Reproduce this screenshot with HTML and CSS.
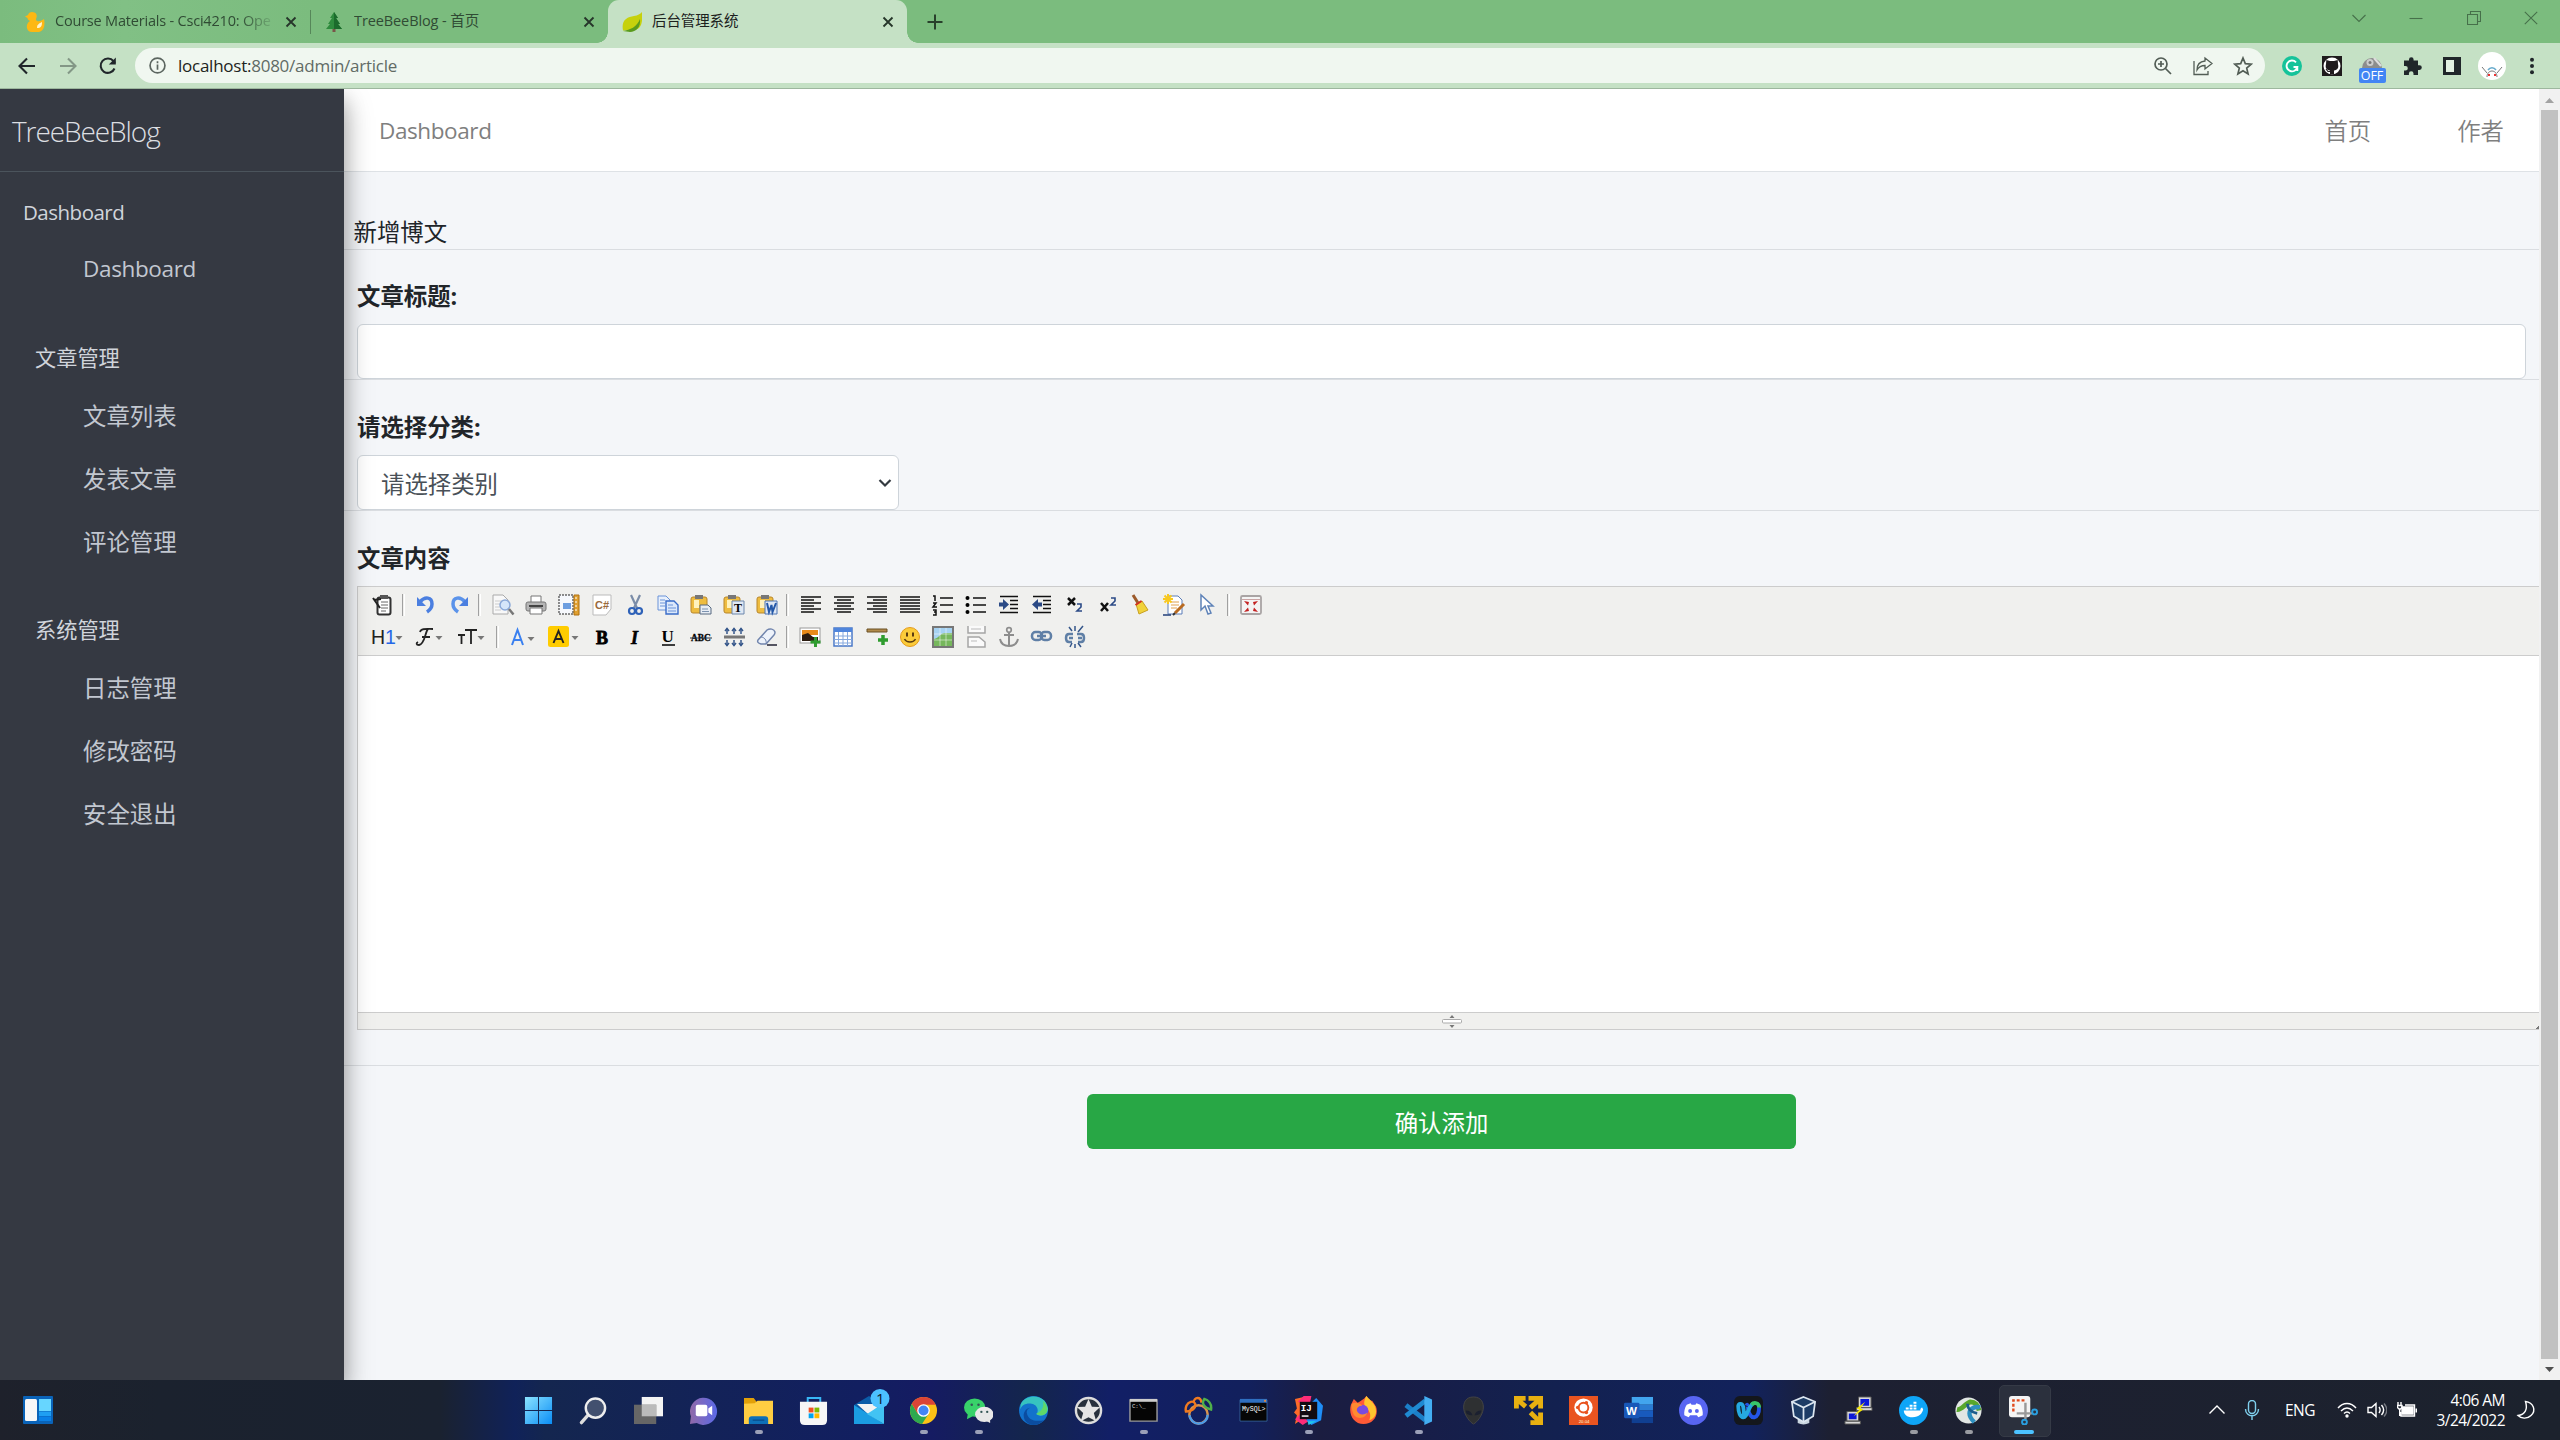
FILE: index.html
```html
<!DOCTYPE html>
<html lang="zh-CN">
<head>
<meta charset="utf-8">
<title>后台管理系统</title>
<link rel="stylesheet" href="styles.css">
</head>
<body>
<div class="screen">
  <header class="tabstrip">
    <div class="tab tab-first">
      <svg class="fav" viewBox="0 0 20 20"><path fill="#fdb813" d="M7 0c4 0 5.500 3 4.500 5.500C11 7 10.500 8 12 9c3 1 5-1 7-2 1 4 1 12-5 13H7c-6 0-7-8-2-11C3 8 2.500 7 2.500 6L0 4.500 3 3C3.500 1 5 0 7 0z"/><path fill="#fff4cc" d="M17 10c0 4-1 6-5 6 0-3 1-4 5-6z"/></svg>
      <span class="tab-title fade">Course Materials - Csci4210: Ope</span>
      <svg class="x" viewBox="0 0 12 12"><path d="M1.500 1.500l9 9M10.500 1.500l-9 9"/></svg>
    </div>
    <div class="tab tab-second">
      <svg class="fav" viewBox="0 0 20 20"><path fill="#795548" d="M8.500 15h3v5h-3z"/><path fill="#2e8b3d" d="M10 0l4 6h-2l4 6h-2l4 5H2l4-5H4l4-6H6z"/><path fill="#1b6b2c" d="M10 0l4 6h-2l4 6h-2l4 5h-8z"/></svg>
      <span class="tab-title">TreeBeeBlog - 首页</span>
      <svg class="x" viewBox="0 0 12 12"><path d="M1.500 1.500l9 9M10.500 1.500l-9 9"/></svg>
    </div>
    <div class="tab tab-active">
      <svg class="fav" viewBox="0 0 20 20"><path fill="#c6d10c" d="M20 0c1 12-1 20-13 18l-6 .5C-1 8 5 5 12 4c4-.5 6-2 8-4z"/><path fill="#5a9b1c" d="M1 19c7-1 14-4 17-12 1 8-4 13-10 13-2 0-5-1-7-1z"/></svg>
      <span class="tab-title">后台管理系统</span>
      <svg class="x" viewBox="0 0 12 12"><path d="M1.500 1.500l9 9M10.500 1.500l-9 9"/></svg>
    </div>
    <svg class="newtab" viewBox="0 0 16 16"><path d="M8 0.500v15M0.500 8h15"/></svg>
    <div class="winctl">
      <svg viewBox="0 0 14 14"><path d="M.5 4l6.500 6.500L13.500 4"/></svg>
      <svg viewBox="0 0 14 14"><path d="M.5 7.500h13"/></svg>
      <svg viewBox="0 0 14 14"><path d="M.5 3.500h10v10H.5zM3.500 3V.5h10v10H11"/></svg>
      <svg viewBox="0 0 14 14"><path d="M.8.800l12.400 12.400M13.200.800L.8 13.200"/></svg>
    </div>
  </header>

  <div class="navbar">
    <div class="navbtns">
      <svg viewBox="0 0 20 20"><path d="M18 10H3M10 2.500L2.500 10l7.500 7.500"/></svg>
      <svg class="dim" viewBox="0 0 20 20"><path d="M2 10h15M10 2.500l7.500 7.500-7.500 7.500"/></svg>
      <svg viewBox="0 0 20 20"><path d="M16.500 12.500A7.200 7.200 0 1 1 15.500 5.200L17 7"/><path class="tip" d="M17.800 1.500v7h-7z"/></svg>
    </div>
    <div class="omnibox">
      <svg class="info" viewBox="0 0 16 16"><circle cx="8" cy="8" r="7"/><path d="M8 7v5M8 4v1.800"/></svg>
      <span class="url"><b>localhost:</b>8080/admin/article</span>
      <div class="omni-icons">
        <svg viewBox="0 0 20 20"><circle cx="8" cy="8" r="6"/><path d="M12.500 12.500l5.500 5.500M8 5v6M5 8h6"/></svg>
        <svg viewBox="0 0 20 20"><path d="M1 5v13.500h14V15M12 2l7 5.500L12 13v-3.500c-4 0-6 1-8 4.500 0-5 3-8.500 8-9z" stroke-width="1.300"/></svg>
        <svg viewBox="0 0 20 20"><path d="M10 2l2.300 5.600 6 .5-4.600 4 1.400 5.900L10 14.800 4.900 18l1.400-5.900-4.600-4 6-.5z"/></svg>
      </div>
    </div>
    <div class="exts">
      <svg viewBox="0 0 20 20"><circle cx="10" cy="10" r="10" fill="#15c39a"/><path d="M14 6.300A5.400 5.400 0 1 0 15.300 11H11.500M15.300 11v4" fill="none" stroke="#fff" stroke-width="1.900"/></svg>
      <svg viewBox="0 0 20 20"><path fill="#1f1b1d" d="M0 0h20v20H0z"/><circle cx="10" cy="10" r="8.500" fill="#fff"/><path fill="#1f1b1d" d="M8 18.500v-4c-3.500-.5-5-2.500-4-6.500L4.300 4 8 5h4l3.700-1 .3 4c1 4-.5 6-4 6.500v4z"/><path stroke="#1f1b1d" stroke-width="1.200" d="M4 13l2 2.500h3" fill="none"/></svg>
      <span class="offext"><svg viewBox="0 0 22 12"><path fill="#8d8d8d" d="M1 12a10 10 0 0 1 20 0z"/><circle cx="9" cy="6.500" r="3.500" fill="#ccc"/><circle cx="9" cy="6.500" r="1.500" fill="#777"/><path d="M13 2l7 8" stroke="#ddd" stroke-width="2"/></svg><i>OFF</i></span>
      <svg viewBox="0 0 20 20"><path fill="#20262a" d="M2 4.500h5V3.500a2.300 2.300 0 0 1 4.600 0v1H16v4.800h1.500a2.300 2.300 0 0 1 0 4.600H16V19h-4.500v-1.500a2.300 2.300 0 0 0-4.600 0V19H2v-4.500h1.500a2.300 2.300 0 0 0 0-4.600H2z"/></svg>
      <svg viewBox="0 0 20 20"><path fill="#20262a" d="M1 1h18v18H1z"/><path fill="#e2f0e2" d="M4 4h8v12H4z"/></svg>
      <svg class="avatar" viewBox="0 0 28 28"><circle cx="14" cy="14" r="14" fill="#fff"/><path d="M4 15l5 6M24 15l-5 6M9 25c0-8 10-8 10 0" fill="none" stroke="#777"/><path d="M10 18c2-3 6-3 8 0" fill="none" stroke="#6ac" stroke-width="1.500"/><path d="M10 22h2v2h-2zM16 22h2v2h-2z" fill="#e33"/></svg>
      <svg viewBox="0 0 20 20"><g fill="#20262a"><circle cx="10" cy="3.800" r="2"/><circle cx="10" cy="10" r="2"/><circle cx="10" cy="16.200" r="2"/></g></svg>
    </div>
  </div>

  <div class="page">
    <aside class="sidebar">
      <div class="brand">TreeBeeBlog</div>
      <nav class="menu">
        <div class="head head-en">Dashboard</div>
        <a class="item item-en">Dashboard</a>
        <div class="head">文章管理</div>
        <a class="item">文章列表</a>
        <a class="item">发表文章</a>
        <a class="item">评论管理</a>
        <div class="head head-sys">系统管理</div>
        <a class="item">日志管理</a>
        <a class="item">修改密码</a>
        <a class="item">安全退出</a>
      </nav>
    </aside>
    <div class="content">
      <div class="topbar"><span class="en">Dashboard</span><span class="links"><a>首页</a><a>作者</a></span></div>
      <main class="main">
        <div class="title-row">新增博文</div>
        <section class="field field-title"><label>文章标题:</label><div class="input"></div></section>
        <section class="field"><label>请选择分类:</label><div class="input select"><span>请选择类别</span><svg viewBox="0 0 14 10"><path d="M1.500 2L7 7.500 12.500 2"/></svg></div></section>
        <section class="field editor-field">
          <label>文章内容</label>
          <div class="editor">
            <div class="tools">
              <div class="row">
                <span class="b"><svg viewBox="0 0 22 22"><rect x="5.500" y="3.500" width="13" height="17" rx="2" fill="#fff" stroke="#333" stroke-width="2"/><path fill="#555" d="M8 1h8v4H8z"/><path stroke="#666" d="M9 8h7M9 11h7M9 14h7M9 17h5"/><path stroke="#222" stroke-width="2" d="M1 4l7 10M2 6l7-1"/></svg></span>
                <span class="s"></span>
                <span class="b"><svg viewBox="0 0 22 22"><path fill="none" stroke="#4b7fe0" stroke-width="3.500" d="M5 8c5-6 12-5 12 2 0 4-2 6-5 8"/><path fill="#4b7fe0" d="M2 3v9h9z"/></svg></span>
                <span class="b"><svg viewBox="0 0 22 22"><path fill="none" stroke="#5b93ea" stroke-width="3.500" d="M17 8C12 2 5 3 5 10c0 4 2 6 5 8"/><path fill="#4b7fe0" d="M20 3v9h-9z"/></svg></span>
                <span class="s"></span>
                <span class="b"><svg viewBox="0 0 22 22"><path fill="#f8f8f8" stroke="#aaa" d="M1 1h10l5 5v14H1z"/><path stroke="#ccc" d="M3 7h8M3 10h5M3 13h5M3 16h6"/><circle cx="13" cy="11" r="5" fill="#d5e6fa" stroke="#8aa8d8" stroke-width="1.500"/><path stroke="#777" stroke-width="2.500" d="M17 15l4.500 5.500"/></svg></span>
                <span class="b"><svg viewBox="0 0 22 22"><path fill="#fff" stroke="#777" d="M6 2h10v8H6z"/><rect x="1" y="8" width="20" height="9" rx="2" fill="#b5b5b5" stroke="#777"/><path fill="#444" d="M4 11h14v2H4z"/><path fill="#fff" stroke="#777" d="M5 14h12v6H5z"/></svg></span>
                <span class="b"><svg viewBox="0 0 22 22"><path fill="#f6f8fc" stroke="#222" stroke-dasharray="2 1" d="M1 1h14v19H1z"/><path fill="#6d9ee0" d="M5 9h8v6H5z"/><path fill="#e0a030" stroke="#b07010" d="M16 1h5v20h-5z"/><path stroke="#fff" d="M17 4h2M17 8h2M17 12h2M17 16h2"/></svg></span>
                <span class="b"><svg viewBox="0 0 22 22"><path fill="#fff" stroke="#bbb" d="M2 1h18v14l-5 6H2z"/><text x="4" y="14.500" font-size="11" font-weight="bold" fill="#9a6a3c" font-family="Liberation Sans">C#</text></svg></span>
                <span class="b"><svg viewBox="0 0 22 22"><path stroke="#7b8da8" stroke-width="2.200" d="M7 1l6 13M16 1l-6 13"/><circle cx="8" cy="17" r="3" fill="none" stroke="#2f62b8" stroke-width="2.200"/><circle cx="15" cy="17" r="3" fill="none" stroke="#2f62b8" stroke-width="2.200"/></svg></span>
                <span class="b"><svg viewBox="0 0 22 22"><path fill="#e8f0fc" stroke="#6a93d8" d="M1 2h8l4 4v10H1z"/><path fill="#dbe8fb" stroke="#3a6cc8" stroke-width="1.400" d="M9 7h8l4 4v9H9z"/><path stroke="#6a93d8" d="M11 11h5M11 14h8M11 17h8M3 6h5M3 9h5M3 12h5"/></svg></span>
                <span class="b"><svg viewBox="0 0 22 22"><rect x="1" y="3" width="16" height="16" rx="2" fill="#eebc40" stroke="#b8862a"/><path fill="#fff2bd" d="M4 6h5v8H4z"/><path fill="#777" d="M5 1h8v4H5z"/><path fill="#e8edf4" stroke="#566980" d="M10 11h8l3 3v6H10z"/><path stroke="#7d93b0" d="M12 15h6M12 17.500h7"/></svg></span>
                <span class="b"><svg viewBox="0 0 22 22"><rect x="1" y="3" width="16" height="16" rx="2" fill="#eebc40" stroke="#b8862a"/><path fill="#fff2bd" d="M4 6h5v8H4z"/><path fill="#777" d="M5 1h8v4H5z"/><path fill="#dfe8f4" stroke="#6c87ac" d="M9 7h12v13H9z"/><text x="11" y="18" font-size="12" font-weight="bold" font-family="Liberation Serif">T</text></svg></span>
                <span class="b"><svg viewBox="0 0 22 22"><rect x="1" y="3" width="16" height="16" rx="2" fill="#eebc40" stroke="#b8862a"/><path fill="#fff2bd" d="M4 6h5v8H4z"/><path fill="#777" d="M5 1h8v4H5z"/><path fill="#dfe8f4" stroke="#4c75b4" d="M9 7h12v13H9z"/><path fill="none" stroke="#2458a8" stroke-width="2" d="M11 9l2 9 2.500-7 1 7L20 9"/></svg></span>
                <span class="s"></span>
                <span class="b"><svg viewBox="0 0 22 22"><path class="k" d="M1 3h20M1 6h13M1 9h20M1 12h13M1 15h20M1 18h13"/></svg></span>
                <span class="b"><svg viewBox="0 0 22 22"><path class="k" d="M1 3h20M4 6h14M1 9h20M4 12h14M1 15h20M4 18h14"/></svg></span>
                <span class="b"><svg viewBox="0 0 22 22"><path class="k" d="M1 3h20M7 6h14M1 9h20M7 12h14M1 15h20M7 18h14"/></svg></span>
                <span class="b"><svg viewBox="0 0 22 22"><path class="k" d="M1 3h20M1 6h20M1 9h20M1 12h20M1 15h20M1 18h20"/></svg></span>
                <span class="b"><svg viewBox="0 0 22 22"><path class="k" d="M8 4h13M8 11h13M8 18h13M1 2h2v5M1 9h3l-3 4h4M1 16h3v2H2h2v3H1"/></svg></span>
                <span class="b"><svg viewBox="0 0 22 22"><path class="k" d="M8 4h13M8 11h13M8 18h13"/><circle cx="2.500" cy="4" r="2"/><circle cx="2.500" cy="11" r="2"/><circle cx="2.500" cy="18" r="2"/></svg></span>
                <span class="b"><svg viewBox="0 0 22 22"><path class="k" d="M2 2.500h18M12 6.500h8M12 10.500h8M12 14.500h8M2 18.500h18"/><path fill="#2b4a86" d="M1 8.500h4V5l6 5.500L5 16v-3.500H1z"/></svg></span>
                <span class="b"><svg viewBox="0 0 22 22"><path class="k" d="M2 2.500h18M12 6.500h8M12 10.500h8M12 14.500h8M2 18.500h18"/><path fill="#2b4a86" d="M11 8.500H7V5l-6 5.500L7 16v-3.500h4z"/></svg></span>
                <span class="b"><svg viewBox="0 0 22 22"><path stroke="#111" stroke-width="2.500" d="M4 4l7 7M11 4l-7 7"/><path fill="none" stroke="#2b4a86" stroke-width="1.600" d="M13 10h4v3l-4 4h5"/></svg></span>
                <span class="b"><svg viewBox="0 0 22 22"><path stroke="#111" stroke-width="2.500" d="M4 9l7 8M11 9l-7 8"/><path fill="none" stroke="#2b4a86" stroke-width="1.600" d="M14 4h4v3l-4 4h5"/></svg></span>
                <span class="b"><svg viewBox="0 0 22 22"><path stroke="#9c5a2a" stroke-width="3" d="M3 1l5 8"/><path fill="#f1d23a" stroke="#c8a020" d="M6 10l6-3 6 9-9 4z"/><path stroke="#d03020" stroke-width="2" d="M5.500 11l6-4"/></svg></span>
                <span class="b"><svg viewBox="0 0 22 22"><path fill="#fff" stroke="#5a7db8" d="M5 2h10l4 4v14H5z"/><path stroke="#e0a050" d="M8 8h8M8 11h8M8 14h6"/><path stroke="#b86a20" stroke-width="3" d="M21 10l-9 9"/><path stroke="#333" stroke-width="2" d="M12 19l-2 2"/><path stroke="#f8c820" stroke-width="2" d="M5 0v10M0 5h10M1.500 1.500l7 7M8.500 1.500l-7 7"/><path stroke="#223f78" stroke-width="1.500" d="M0 21h8"/></svg></span>
                <span class="b"><svg viewBox="0 0 22 22"><path fill="#fff" stroke="#5f83b8" stroke-width="1.500" d="M5 1v15l4-4 3 8 3-1-3-7h5z"/></svg></span>
                <span class="s"></span>
                <span class="b"><svg viewBox="0 0 22 22"><rect x="1" y="2" width="20" height="18" rx="1.500" fill="#f4f4f4" stroke="#a9a4a4" stroke-width="1.800"/><path stroke="#c9a4a4" d="M2 5.500h18"/><path fill="#c32222" d="M4 7l5 1-1 3.500zM18 7l-5 1 1 3.500zM4 18l5-1-1-3.500zM18 18l-5-1 1-3.500z"/></svg></span>
              </div>
              <div class="row row-2">
                <span class="d"><svg viewBox="0 0 32 22"><text x="0" y="18" font-size="19.500" font-family="Liberation Sans" fill="#222">H<tspan fill="#2467e8">1</tspan></text><path class="ar" d="M24.500 10h7L28 14z"/></svg></span>
                <span class="d"><svg viewBox="0 0 32 22"><path fill="none" stroke="#222" stroke-width="1.800" d="M7 6c1-4 7-3 13-3M15 3c-3 3-3 15-9 16-3 0-3-2-1-3M9 11h8"/><path class="ar" d="M22.500 10h7L26 14z"/></svg></span>
                <span class="d"><svg viewBox="0 0 32 22"><path fill="none" stroke="#222" stroke-width="1.800" d="M3 9h7M6.500 9v9M10 4h12M16 4v14"/><path class="ar" d="M22.500 10h7L26 14z"/></svg></span>
                <span class="s"></span>
                <span class="d d2"><svg viewBox="0 0 32 22"><path fill="none" stroke="#3a80f0" stroke-width="2" d="M5 19l5.500-15L16 19M7 14h7"/><path class="ar" d="M20.500 11h7L24 15z"/></svg></span>
                <span class="d d2"><svg viewBox="0 0 32 22"><rect x="0" y="0" width="21" height="21" rx="2.500" fill="#fc0"/><path fill="none" stroke="#222" stroke-width="1.900" d="M5.500 17l5-12 5 12M7 13h7"/><path class="ar" d="M23.500 10h7L27 14z"/></svg></span>
                <span class="b"><svg viewBox="0 0 22 22"><text x="5" y="17.500" font-size="18" font-weight="bold" stroke="#000" stroke-width=".8" font-family="Liberation Serif">B</text></svg></span>
                <span class="b"><svg viewBox="0 0 22 22"><text x="7" y="17.500" font-size="18" font-weight="bold" stroke="#000" stroke-width=".6" font-style="italic" font-family="Liberation Serif">I</text></svg></span>
                <span class="b"><svg viewBox="0 0 22 22"><text x="4.500" y="16" font-size="17" font-weight="bold" font-family="Liberation Serif">U</text><path stroke="#000" stroke-width="1.500" d="M5 19h13"/></svg></span>
                <span class="b"><svg viewBox="0 0 22 22"><text x="1" y="15" font-size="9.300" font-weight="bold" stroke="#000" stroke-width=".3" font-family="Liberation Serif">ABC</text><path stroke="#234" d="M0 12h22"/></svg></span>
                <span class="b"><svg viewBox="0 0 22 22"><path fill="#777" d="M1 9.500h21v3H1z"/><g stroke="#35568a" stroke-width="1.500" fill="none"><path d="M4 8V2.500M11 8V2.500M18 8V2.500M4 14v5.500M11 14v5.500M18 14v5.500"/><path d="M2 5l2-2.500L6 5M9 5l2-2.500L13 5M16 5l2-2.500L20 5M2 17l2 2.500L6 17M9 17l2 2.500 2-2.500M16 17l2 2.500 2-2.500"/></g></svg></span>
                <span class="b"><svg viewBox="0 0 22 22"><path fill="#eef3fb" stroke="#7185ad" stroke-width="1.500" d="M2 14L11 4c3-2 7-1 8 2 0 1 0 2-1 3l-8 9H5c-3-1-4-2-3-4z"/><path stroke="#7185ad" fill="none" d="M5 11c3 0 6 3 5 7"/><path stroke="#223" stroke-width="1.500" d="M11 19h10"/></svg></span>
                <span class="s"></span>
                <span class="b"><svg viewBox="0 0 22 22"><rect x="1" y="2" width="20" height="15" fill="#fff" stroke="#999"/><path fill="#e88a18" d="M3 4h16v5H3z"/><path fill="#2b1c10" d="M3 9l6-2 5 4h5v4H3z"/><path stroke="#2f9c2f" stroke-width="3" d="M16.500 11v10M11.500 16h10"/></svg></span>
                <span class="b"><svg viewBox="0 0 22 22"><path fill="#fff" stroke="#4a78c8" stroke-width="1.500" d="M2 2h18v18H2z"/><path fill="#4f85dc" d="M2 2h18v4H2z"/><path stroke="#86a9de" d="M2 10h18M2 13.500h18M2 17h18M6.500 6v14M11 6v14M15.500 6v14"/></svg></span>
                <span class="b"><svg viewBox="0 0 22 22"><path fill="#b08a4a" stroke="#6b5024" d="M1 3h20v3H1z"/><path stroke="#2f9c2f" stroke-width="3.500" d="M17 9v10M12 14h10"/></svg></span>
                <span class="b"><svg viewBox="0 0 22 22"><circle cx="11" cy="11" r="9.500" fill="#fbcb3a" stroke="#e59b1c"/><path stroke="#5b3b10" stroke-width="2" d="M8 6.500v4M14 6.500v4"/><path fill="none" stroke="#5b3b10" stroke-width="1.500" d="M5.500 13c2 4 9 4 11 0"/></svg></span>
                <span class="b"><svg viewBox="0 0 22 22"><path fill="#a6d2f2" stroke="#777" stroke-width="2" d="M1 1h20v20H1z"/><path fill="#76b75c" d="M2 13c5-1 6-6 11-6h7v13H2z"/><path stroke="#fff" stroke-opacity=".5" d="M8 2v18M14 2v18M2 8h18M2 14h18"/></svg></span>
                <span class="b"><svg viewBox="0 0 22 22"><path fill="#fafafa" stroke="#a5a5a5" stroke-width="1.500" d="M3 0v7h17V0M3 21V11h11l6 5v5z"/><path stroke="#bbb" d="M6 3h10M6 15h6"/></svg></span>
                <span class="b"><svg viewBox="0 0 22 22"><path fill="none" stroke="#8d8d8d" stroke-width="2" d="M11 6v14M6 9h10M2 13c1 5 5 7 9 7s8-2 9-7"/><circle cx="11" cy="4" r="2.300" fill="none" stroke="#8d8d8d" stroke-width="1.700"/></svg></span>
                <span class="b"><svg viewBox="0 0 22 22"><g fill="none" stroke="#5f7fa6" stroke-width="2.500"><rect x="1" y="6" width="10" height="8" rx="3.500"/><rect x="10" y="6" width="10" height="8" rx="3.500"/><path d="M6 10h9"/></g></svg></span>
                <span class="b"><svg viewBox="0 0 22 22"><g fill="none" stroke="#5f7fa6" stroke-width="2.500"><path d="M9 8H5c-4 0-4 8 0 8h3M13 8h4c4 0 4 8 0 8h-3M5 12h4M14 12h4"/></g><path stroke="#35568a" stroke-width="1.500" d="M11 0v5M5 1l3 4M19 0l-5 6M8 17l-2 4M11 18v4M14 17l3 4"/></svg></span>
              </div>
            </div>
            <div class="canvas"></div>
            <div class="status"><svg viewBox="0 0 20 13"><path fill="#777" d="M7.500 3L10 0l2.500 3zM7.500 10L10 13l2.500-3z"/><rect x=".5" y="4.500" width="19" height="3.500" rx="1" fill="#fff" stroke="#aaa"/></svg><i class="grip"></i></div>
          </div>
        </section>
        <div class="submit-row"><button class="submit">确认添加</button></div>
      </main>
    </div>
    <div class="scrollbar">
      <svg viewBox="0 0 21 21"><path fill="#a3a3a3" d="M6 14h9l-4.500-5z"/></svg>
      <div class="thumb"></div>
      <svg viewBox="0 0 21 21"><path fill="#505050" d="M6 8h9l-4.500 5z"/></svg>
    </div>
  </div>

  <footer class="taskbar">
    <svg class="widgets" viewBox="0 0 30 28"><rect width="30" height="28" rx="1" fill="#0a63b8"/><rect x="2" y="3" width="12" height="22" rx="1.500" fill="#f7f7f7"/><path fill="#67d6ff" d="M16 3h12v12H16z"/><path fill="#1f9ff2" d="M16 15.500h12V20H16z"/><path fill="#0a80e6" d="M16 20.500h12V25H16z"/></svg>
    <div class="apps">
      <span><svg viewBox="0 0 30 30"><defs><linearGradient id="w" x2="1" y2="1"><stop stop-color="#8be3ff"/><stop offset="1" stop-color="#0a8df5"/></linearGradient></defs><path fill="url(#w)" d="M1 1h13.500v13.500H1zM15.500 1H29v13.500H15.500zM1 15.500h13.500V29H1zM15.500 15.500H29V29H15.500z"/></svg></span>
      <span><svg viewBox="0 0 30 30"><path stroke="#ddd" stroke-width="3.500" stroke-linecap="round" d="M10 19l-7.500 8.500"/><circle cx="17" cy="12.500" r="10" fill="#42506f" stroke="#eee" stroke-width="2.500"/></svg></span>
      <span><svg viewBox="0 0 30 30"><path fill="#f4f4f4" d="M8 1h22v20H8z"/><path fill="#666" d="M0 9h23v20H0z"/><path fill="#bbb" d="M8 9h15v12H8z"/></svg></span>
      <span><svg viewBox="0 0 30 30"><defs><linearGradient id="t" x2="1"><stop stop-color="#9069a8"/><stop offset="1" stop-color="#5b69e8"/></linearGradient></defs><path fill="url(#t)" d="M1 29l1-8a14 14 0 1 1 6 7z"/><rect x="7" y="9" width="12" height="12" rx="2" fill="#fff"/><path fill="#fff" d="M20 13l4-3v10l-4-3z"/></svg></span>
      <span class="run"><svg viewBox="0 0 30 30"><path fill="#e2a008" d="M0 2h10l3 4v6H0z"/><path fill="#ffcd42" d="M0 8l11-.5L14 5h16v24H0z"/><path fill="#0e6fb8" d="M5 29v-5c0-2 1-3 3-3h14c2 0 3 1 3 3v5z"/><path stroke="#0a4f90" stroke-width="1.500" d="M9 25h12"/></svg></span>
      <span><svg viewBox="0 0 30 30"><path fill="none" stroke="#38b6f5" stroke-width="2" d="M9 8V2h13v6"/><path fill="#f6f6f6" d="M1 6h28v19q0 5-5 5H6q-5 0-5-5z"/><path fill="#f25022" d="M10 12h5v5h-5z"/><path fill="#7fba00" d="M16 12h5v5h-5z"/><path fill="#00a4ef" d="M10 18h5v5h-5z"/><path fill="#ffb900" d="M16 18h5v5h-5z"/></svg></span>
      <span><svg class="wide" viewBox="0 0 36 36"><path fill="#0b5ca8" d="M0 16L15 7l15 9v9H0z"/><path fill="#f3f3f3" d="M3 15h24L15 26z"/><path fill="#1b9de2" d="M0 16l30 19H0z"/><path fill="#42c3f3" d="M30 14v21L13 25z"/><circle cx="26" cy="9.500" r="9.500" fill="#4cc2ff"/><text x="22" y="15" font-size="15" font-family="Open Sans" fill="#10202c">1</text></svg></span>
      <span class="run"><svg viewBox="0 0 30 30"><circle cx="15" cy="15" r="14" fill="#fbc116"/><path fill="#2da94f" d="M2.900 8A14 14 0 0 0 13.500 29l7-11H9z"/><path fill="#db4437" d="M2.900 8a14 14 0 0 1 24.800 1H15L9 18z"/><circle cx="15" cy="15" r="6.500" fill="#fff"/><circle cx="15" cy="15" r="5.200" fill="#4285f4"/></svg></span>
      <span class="run"><svg viewBox="0 0 30 30"><ellipse cx="11" cy="12" rx="11" ry="9.500" fill="#38d26a"/><path fill="#38d26a" d="M4 18l-1 6 6-3z"/><ellipse cx="21" cy="19" rx="9.500" ry="8" fill="#e8e8e8"/><path fill="#e8e8e8" d="M22 25l5 3v-5z"/><g fill="#355"><circle cx="8" cy="9" r="1.300"/><circle cx="15" cy="9" r="1.300"/><circle cx="18" cy="16.500" r="1.200"/><circle cx="24" cy="16.500" r="1.200"/></g></svg></span>
      <span><svg viewBox="0 0 30 30"><circle cx="15" cy="15" r="15" fill="#1272cc"/><path fill="#36c3c0" d="M2 8C8-3 28-2 30 13c0 7-8 9-12 6 3-4 1-10-5-11C8 7 3 9 1 14z"/><path fill="#5fd868" d="M25 5c6 6 6 14-1 15-4 0-6-1-6-2 6-2 8-7 7-13z"/><path fill="#0b4da0" d="M8 17c1 8 9 10 18 8-7 7-16 6-20 0-3-6 0-12 6-13-3 1-4 3-4 5z"/></svg></span>
      <span><svg viewBox="0 0 30 30"><circle cx="15" cy="15" r="13" fill="#27303c" stroke="#ddd" stroke-width="2.500"/><path fill="#e4e4e4" d="M15 3l3.500 8 8.500.500-6.500 6L23 26l-8-4-8 4 2.500-8.500-6.500-6 8.500-.5z"/></svg></span>
      <span class="run"><svg viewBox="0 0 30 30"><path fill="#050505" stroke="#999" stroke-width="1.500" d="M1 4h28v22H1z"/><path fill="#ccc" d="M1 3h28v3H1z"/><text x="3" y="12" font-size="6" fill="#ddd" font-family="Liberation Mono">C:\_</text></svg></span>
      <span><svg viewBox="0 0 30 30"><g fill="none" stroke-width="2.500"><circle cx="15" cy="19" r="9.500" stroke="#d9934e"/><path stroke="#4c9be8" d="M5.500 20c1 5 5 9 10 8.500 5 0 9-4 9-9"/><path stroke="#f07a20" d="M2 16c-1-4 1-9 5-10s6 3 4 6-6 4-9 4zM10 7c0-6 8-7 8 0"/><path stroke="#4fb04a" d="M28 14C29 8 25 4 21 3c-3 4-1 9 7 11z"/></g></svg></span>
      <span><svg viewBox="0 0 30 30"><path fill="#060606" stroke="#335c94" d="M1 4h28v22H1z"/><path fill="#2f6fc0" d="M1 3h28v4H1z"/><path fill="#d84" d="M26 4h2v2h-2z"/><text x="3" y="16" font-size="6.800" fill="#fff" font-family="Liberation Mono">MySQL&gt;</text></svg></span>
      <span class="run"><svg viewBox="0 0 30 30"><path fill="#fc6a2a" d="M1 3l9-2 6 8-6 14-9 6 2-9-3-3 3-4z"/><path fill="#fe2c79" d="M10 0h8l-2 10-12-4zM1 24l6-6 8 8-6 4z"/><path fill="#1f8ef8" d="M18 7l5-5 7 8-2 15-10 5-5-5z"/><path fill="#21c8e8" d="M14 26h9l-8 4z"/><path fill="#120c12" d="M6 6h18v18H6z"/><text x="7" y="15" font-size="9.500" font-weight="bold" fill="#fff" font-family="Liberation Mono">IJ</text><path fill="#fff" d="M8 20h7v1.500H8z"/></svg></span>
      <span><svg viewBox="0 0 30 30"><path fill="#ff5a36" d="M2 9l3-6 4 4c3-2 6-3 9-7 3 4 4 5 6 5l4 6c3 9-3 18-13 18S-1 19 2 9z"/><path fill="#ffc52e" d="M18 0c4 5 10 8 10 16 0 4-3 8-7 9 2-5 1-9-3-12-3-3-3-8 0-13z"/><circle cx="14" cy="15" r="6" fill="#7a4be0"/><path fill="#ff8a30" d="M3 8c4-2 8-1 11 2-4 0-6 2-6 5 2 5 8 5 11 2-2 7-13 8-15 0-1-3-2-6-1-9z"/></svg></span>
      <span class="run"><svg viewBox="0 0 30 30"><path stroke="#1b7fc8" stroke-width="5" d="M2 9.500L22 25"/><path stroke="#1f8ad2" stroke-width="5" d="M2 20.500L22 5"/><path fill="#43aef2" d="M21 0l8 3.500v23L21 30z"/></svg></span>
      <span><svg viewBox="0 0 30 30"><path fill="#2e3032" stroke="#444" d="M15 1c8 0 11 6 10 13-1 6-6 13-10 15-4-2-9-9-10-15C4 7 7 1 15 1z"/><path fill="#1b2030" d="M7 15c4 0 6 2 7 5-4 0-7-1-7-5zM23 15c-4 0-6 2-7 5 4 0 7-1 7-5z"/></svg></span>
      <span><svg viewBox="0 0 30 30"><path fill="none" stroke="#e8b010" stroke-width="5" d="M2.500 13V2.500H12M4 4l8 7M15 2.500h12.500V13M26 4l-9 8M27.500 17v10.500H17M26 26l-9-9"/></svg></span>
      <span><svg viewBox="0 0 30 30"><path fill="#e95420" d="M0 0h30v30H0z"/><circle cx="15" cy="12" r="9.500" fill="#fff"/><circle cx="15" cy="12" r="5" fill="none" stroke="#e95420" stroke-width="2"/><g fill="#e95420"><circle cx="9" cy="12" r="1.800"/><circle cx="18" cy="7" r="1.800"/><circle cx="18" cy="17" r="1.800"/></g><text x="10" y="28" font-size="4.500" fill="#ffd" font-family="Liberation Sans">20.04</text></svg></span>
      <span><svg viewBox="0 0 30 30"><path fill="#42a5ee" d="M8 1h22v8H8z"/><path fill="#2b7cd3" d="M8 9h22v6H8z"/><path fill="#185abd" d="M8 15h22v7H8z"/><path fill="#103f91" d="M8 22h22v6H8z"/><rect x="0" y="7" width="16" height="16" rx="1.500" fill="#1857b8"/><text x="2" y="19.500" font-size="12" font-weight="bold" fill="#fff" font-family="Liberation Sans">W</text></svg></span>
      <span><svg viewBox="0 0 30 30"><circle cx="15" cy="15" r="15" fill="#5865f2"/><path fill="#fff" d="M8 9l4-1.500 1 1.500h4l1-1.500L22 9c2 3 3 7 2.500 11L20 22l-1.500-2h-7L10 22l-4.500-2C5 16 6 12 8 9z"/><circle cx="11.500" cy="15.500" r="2" fill="#5865f2"/><circle cx="18.500" cy="15.500" r="2" fill="#5865f2"/></svg></span>
      <span><svg viewBox="0 0 30 30"><rect width="30" height="30" rx="6" fill="#14171c"/><g fill="none" stroke-width="4"><path stroke="#2455e8" d="M13 10c2-5 0 13 8 12 4-1 5-7 5-11"/><path stroke="#25a8e0" d="M4.500 12c-1-5 4-5 5-1 1 5 1 11 0 11-3 0-5-5-5-10zM9 22c5 1 6-13 11-14"/><path stroke="#38c76a" d="M18 9c3-3 8-2 8 3"/></g></svg></span>
      <span><svg viewBox="0 0 30 30"><path fill="#c9d5e0" d="M9 23h12v5q-6 3-12 0z"/><path fill="#1d3c66" stroke="#dce6f0" stroke-width="1.800" d="M15 1l12 5-2 15-10 6-10-6L3 6z"/><path fill="none" stroke="#dce6f0" stroke-width="1.800" d="M3 6l12 6 12-6M15 12v15"/></svg></span>
      <span><svg viewBox="0 0 30 30"><path fill="#d8d8d8" stroke="#555" d="M15 1h13v11H15zM13 12h16v3H13zM3 16h12v10H3zM1 26h16v3H1z"/><path fill="#0a18d8" d="M17 3h9v7h-9zM5 18h8v6H5z"/><path fill="#f5e800" d="M22 6l-9 7 3 1-6 7 10-7-3-1z"/></svg></span>
      <span class="run gray"><svg viewBox="0 0 30 30"><circle cx="15" cy="15" r="15" fill="#0ea5f7"/><path fill="#fff" d="M5 15h17c0-2 1-3 2-3l1 2c-1 4-4 8-11 8-6 0-9-3-9-7zM7 12h3v2H7zM11 12h3v2h-3zM15 12h3v2h-3zM11 9h3v2h-3zM15 9h3v2h-3zM15 6h3v2h-3z"/></svg></span>
      <span class="run gray"><svg viewBox="0 0 30 30"><circle cx="15" cy="15" r="13.500" fill="#e2e6e4"/><path fill="none" stroke="#58a72c" stroke-width="5" d="M3 14c5 1 9-7 14-8 6 0 8 4 9 9"/><path fill="none" stroke="#2d8fc0" stroke-width="4.500" d="M27 12c-5-2-11 1-11 6 0 4 3 7 5 9"/><path fill="none" stroke="#1d5d8c" stroke-width="3" d="M14 8c0 5 4 9 10 10"/></svg></span>
      <span class="current"><svg viewBox="0 0 30 30"><rect x="0" y="0" width="22" height="22" rx="3" fill="#f4f4f4"/><path fill="none" stroke="#e04a1c" stroke-width="2.500" stroke-dasharray="3 2" d="M4.500 16V4.500H16"/><path fill="none" stroke="#999" stroke-width="2.500" d="M17 7v17M8 18h16"/><circle cx="26.500" cy="16.500" r="2.500" fill="none" stroke="#2a9fe0" stroke-width="2"/><circle cx="16" cy="27" r="2.500" fill="none" stroke="#2a9fe0" stroke-width="2"/></svg></span>
    </div>
    <div class="tray">
      <svg class="chev" viewBox="0 0 20 20"><path d="M2.500 13.500L10 6l7.500 7.500"/></svg>
      <svg class="mic" viewBox="0 0 20 20"><rect x="6.500" y="0.500" width="7" height="13" rx="3.500"/><path d="M3.500 9c0 9 13 9 13 0M10 16v4"/></svg>
      <span class="eng">ENG</span>
      <svg class="wifi" viewBox="0 0 20 20"><path d="M1 8c5-6 13-6 18 0M4 11c4-4 8-4 12 0M7 13.500c2-2 4-2 6 0"/><circle cx="10" cy="16" r="1" fill="#fff"/></svg>
      <svg class="vol" viewBox="0 0 20 20"><path d="M1 7.500h3.500L9 3.500v13l-4.500-4H1zM12 7c1.500 2 1.500 4 0 6M14.500 5c3 3.500 3 6.500 0 10"/><path opacity=".4" d="M17 3.500c4 4.500 4 8.500 0 13"/></svg>
      <svg class="bat" viewBox="0 0 20 20"><path fill="#fff" d="M5 7h11v7H5z"/><path d="M8 5h9.500v11H4v-4M19.300 8.500v4M1 2v3M4 2v3M.5 5.500h4.500v2L3.500 9H2L.5 7.500zM2.700 9v7"/></svg>
      <div class="clock"><span>4:06 AM</span><span>3/24/2022</span></div>
      <svg class="moon" viewBox="0 0 20 20"><path d="M9.500 1.500c8 1 11 9 5.500 14-4 4-10 3-13 0 7-1 10-6 7.500-14z"/></svg>
    </div>
  </footer>
</div>
</body>
</html>
```
FILE: styles.css
```css
* { box-sizing: border-box; }
body { margin: 0; font-family: "Open Sans", "Noto Sans CJK SC", sans-serif; color: #212529; }
svg { display: block; flex: none; }
.screen { width: 2560px; height: 1440px; display: flex; flex-direction: column; overflow: hidden; }

/* browser tabs */
.tabstrip { height: 43px; flex: none; background: #7bbc7e; display: flex; align-items: stretch; }
.tab { display: flex; align-items: center; font-size: 14.5px; color: #304b34; position: relative; }
.tab-first { width: 311px; padding: 0 14px 0 25px; background: linear-gradient(90deg, #7bbc7e, #81c085 40%, #7bbc7e); }
.tab-first::after { content: ""; position: absolute; right: 0; top: 10px; width: 1px; height: 24px; background: #568759; }
.tab-second { width: 297px; padding: 0 13px 0 13px; }
.tab-active { width: 299px; padding: 0 13px 0 14px; background: #c5e1c5; border-radius: 11px 11px 0 0; color: #1c211d; }
.tab-active::before, .tab-active::after { content: ""; position: absolute; bottom: 0; width: 11px; height: 11px; }
.tab-active::before { left: -11px; background: radial-gradient(circle at 0 0, transparent 10.5px, #c5e1c5 11px); }
.tab-active::after { right: -11px; background: radial-gradient(circle at 100% 0, transparent 10.5px, #c5e1c5 11px); }
.fav { width: 20px; height: 20px; margin-right: 10px; }
.tab-title { flex: 1; white-space: nowrap; overflow: hidden; letter-spacing: -0.1px; line-height: 24px; margin-top: -1px; }
.fade { -webkit-mask-image: linear-gradient(90deg, #000 185px, transparent 222px); margin-right: 9px; letter-spacing: -0.200px; }
.x { width: 12px; height: 12px; }
.x path { stroke: #26352a; stroke-width: 1.800; }
.newtab { width: 16px; height: 16px; margin: 14px 0 0 20px; }
.newtab path { stroke: #28402b; stroke-width: 2; }
.winctl { margin: 11px 22px 0 auto; display: flex; gap: 43.500px; }
.winctl svg { width: 14px; height: 14px; }
.winctl path { fill: none; stroke: #46704a; stroke-width: 1.100; }

/* address bar */
.navbar { height: 46px; flex: none; background: #c5e1c5; border-bottom: 1px solid #9db79e; display: flex; align-items: center; }
.navbtns { width: 135px; padding-left: 17px; display: flex; gap: 20.500px; }
.navbtns svg { width: 20px; height: 20px; }
.navbtns path { fill: none; stroke: #20262a; stroke-width: 2.100; }
.navbtns .tip { fill: #20262a; stroke: none; }
.navbtns .dim path { stroke: #839786; }
.omnibox { width: 2130px; height: 35px; border-radius: 18px; background: #f0f7f0; display: flex; align-items: center; padding: 0 12px 0 14px; }
.info { width: 17px; height: 17px; fill: none; stroke: #5c6660; stroke-width: 1.600; margin-right: 12px; }
.url { font-size: 17px; color: #616b65; letter-spacing: -0.250px; }
.url b { font-weight: 400; color: #1d2420; }
.omni-icons { margin-left: auto; display: flex; gap: 20px; }
.omni-icons svg { width: 20px; height: 20px; fill: none; stroke: #525d55; stroke-width: 1.700; }
.exts { flex: 1; display: flex; align-items: center; justify-content: space-between; padding: 0 18px 0 17px; }
.exts svg { width: 20px; height: 20px; }
.exts .avatar { width: 28px; height: 28px; margin: 0 -4px; }
.offext { width: 28px; margin: 7px -4px 0; display: flex; flex-direction: column; align-items: center; }
.offext svg { width: 22px; height: 12px; }
.offext i { font: normal 12.500px/15px "Open Sans", sans-serif; width: 27px; background: #4285f4; color: #fff; text-align: center; border-radius: 2px; }

/* page */
.page { flex: 1; display: flex; background: #f4f6f9; min-height: 0; overflow: hidden; }
.sidebar { width: 344px; flex: none; background: #353942; color: #c8cbd0; box-shadow: 0 14px 28px rgba(0,0,0,.25), 0 10px 20px rgba(0,0,0,.22); z-index: 2; }
.brand { height: 83px; border-bottom: 1px solid #4b545c; padding: 0 0 0 12px; font-size: 28px; line-height: 85px; font-weight: 300; letter-spacing: -1.080px; color: #dcdee1; }
.menu { display: flex; flex-direction: column; font-size: 23.400px; }
.head { font-size: 21.200px; height: 52px; line-height: 50px; padding-left: 35px; margin-top: 32px; color: #d0d4db; }
.head-en { padding-left: 23px; margin-top: 14px; line-height: 52px; letter-spacing: -.5px; font-size: 20.500px; }
.head-sys { margin-top: 31px; }
.item { height: 63px; line-height: 63px; padding-left: 83px; color: #c2c7d0; }
.item-en { font-size: 22.500px; line-height: 61px; letter-spacing: -.35px; }
.content { flex: 1; min-width: 0; overflow: hidden; }
.topbar { height: 83px; background: #fff; border-bottom: 1px solid #dee2e6; display: flex; justify-content: space-between; align-items: center; padding: 0 35px; font-size: 23.400px; color: #7f7f7f; }
.topbar .en { font-size: 22.500px; letter-spacing: -.4px; }
.links { display: flex; gap: 86px; font-weight: 350; padding-bottom: 1px; }
.title-row { height: 78px; padding: 42px 0 0 9.500px; line-height: 36px; border-bottom: 1px solid #dadde1; font-size: 23.400px; }
.field { border-bottom: 1px solid #dadde1; padding: 29px 13px 0; font-size: 23.400px; height: 131px; }
.field-title { height: 130px; padding-top: 28px; }
.field label { display: block; font-weight: 700; height: 46px; line-height: 36px; }
.input { height: 55px; background: #fff; border: 1px solid #ced4da; border-radius: 6px; }
.select { width: 542px; display: flex; align-items: center; justify-content: space-between; padding: 0 6px 0 23px; color: #495057; }
.select svg { width: 14px; height: 10px; fill: none; stroke: #343a40; stroke-width: 2.200; }

/* rich-text editor */
.editor-field { height: 555px; padding-right: 0; }
.editor { border: 1px solid #ccc; border-right: 0; height: 444px; display: flex; flex-direction: column; background: #fff; }
.tools { height: 69px; background: #f0f0ee; border-bottom: 1px solid #ccc; padding: 2px 0 0 8.500px; flex: none; }
.row { height: 32px; display: flex; align-items: center; }
.b { width: 33.080px; display: flex; justify-content: center; flex: none; }
.b svg { width: 22px; height: 22px; overflow: visible; }
.d { width: 42.300px; padding-left: 4px; }
.d2 { width: 40.800px; padding-left: 3.500px; }
.d svg { width: 32px; height: 22px; overflow: visible; }
.s { width: 3px; height: 22px; border-left: 1px solid #a0a0a0; border-right: 1px solid #fff; margin: 0 4.700px 0 2.500px; }
.k { stroke: #111; stroke-width: 1.500; fill: none; }
.ar { fill: #777; }
.canvas { flex: 1; background: #fff; }
.status { height: 17px; background: #f0f0ee; border-top: 1px solid #ccc; display: flex; align-items: center; justify-content: center; padding-left: 7px; position: relative; }
.status svg { width: 20px; height: 13px; }
.grip { position: absolute; right: 0; bottom: 0; width: 3px; height: 3px; background: linear-gradient(135deg, transparent 40%, #777 40%); }
.submit-row { padding: 28px 0 0; display: flex; justify-content: center; }
.submit { width: 709px; height: 55px; border: 0; border-radius: 6px; background: #28a745; color: #fff; font: 400 23.400px "Open Sans", "Noto Sans CJK SC", sans-serif; }
.scrollbar { width: 21px; flex: none; background: #f1f1f1; display: flex; flex-direction: column; padding: 0 2px; align-items: center; }
.scrollbar svg { width: 21px; height: 21px; }
.thumb { flex: 1; width: 17px; background: #c1c1c1; }

/* taskbar */
.taskbar { height: 60px; flex: none; display: flex; align-items: center; background: linear-gradient(90deg, #1e212b 0, #1b222e 160px, #1a2230 440px, #102259 515px, #14264f 545px, #121f60 860px, #151b62 930px, #14264c 1030px, #121f66 1110px, #12205c 1250px, #1b1d40 1320px, #181d47 1400px, #13214f 1540px, #12225c 1750px, #1d2032 1830px, #1c222d 2560px); color: #fff; }
.widgets { width: 30px; height: 28px; margin-left: 23px; }
.apps { display: flex; margin-left: 458px; }
.apps span { width: 55px; height: 60px; display: flex; align-items: center; justify-content: center; position: relative; }
.apps svg { width: 29px; height: 29px; position: relative; z-index: 1; }
.apps .wide { width: 36px; height: 36px; margin: -6px 0 0 6px; }
.run::after { content: ""; position: absolute; left: 23.500px; top: 50px; width: 8px; height: 4px; border-radius: 2px; background: #9ba0b8; }
.gray::after { background: #9a9ca2; }
.current::before { content: ""; position: absolute; left: 2.500px; top: 5px; width: 50px; height: 50px; border-radius: 5px; background: #2b303d; border: 1px solid #353a46; }
.current::after { content: ""; position: absolute; left: 17.500px; top: 50px; width: 20px; height: 4px; border-radius: 2px; background: #4cc2ff; }
.tray { margin-left: auto; display: flex; align-items: center; width: 353px; font-size: 15.500px; }
.tray svg { width: 20px; height: 20px; fill: none; stroke: #fff; stroke-width: 1.400; }
.tray .mic { stroke: #7fd0ee; margin-left: 15px; }
.eng { width: 30px; margin-left: 23px; letter-spacing: -.5px; }
.tray .wifi { margin-left: 22px; }
.tray .vol { margin-left: 10px; }
.tray .bat { margin-left: 10px; }
.clock { width: 86px; margin-left: 2px; text-align: right; display: flex; flex-direction: column; line-height: 20px; letter-spacing: -.55px; }
.tray .moon { margin-left: 11px; }
```
